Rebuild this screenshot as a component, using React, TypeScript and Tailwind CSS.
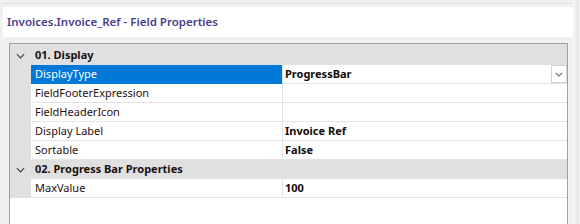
import React from 'react';

type Row = { name: string; value: string; selected?: boolean; dropdown?: boolean };
type Group = { title: string; rows: Row[]; first?: boolean };

const GROUPS: Group[] = [
  {
    title: '01. Display',
    first: true,
    rows: [
      { name: 'DisplayType', value: 'ProgressBar', selected: true, dropdown: true },
      { name: 'FieldFooterExpression', value: '' },
      { name: 'FieldHeaderIcon', value: '' },
      { name: 'Display Label', value: 'Invoice Ref' },
      { name: 'Sortable', value: 'False' },
    ],
  },
  {
    title: '02. Progress Bar Properties',
    rows: [{ name: 'MaxValue', value: '100' }],
  },
];

const Chevron = ({ className }: { className?: string }) => (
  <svg viewBox="0 0 10 6" className={className} fill="none" stroke="currentColor" strokeWidth="1.3">
    <path d="M1 1 L5 5 L9 1" />
  </svg>
);

export default function App() {
  return (
    <div
      className="w-[580px] h-[224px] overflow-hidden bg-[#f0f0f0] flex text-[11px]"
      style={{ fontFamily: '"Noto Sans", "Open Sans", sans-serif' }}
    >
      <div className="w-[573px] flex flex-col pt-[3px]">
        <div className="flex-1 flex flex-col border-t border-[#e3e3e3] pt-[3px]">
          {/* title */}
          <div className="ml-[3px] h-[30px] bg-white flex items-center pl-[4px] text-[11.5px] font-semibold text-[#483d8b]">
            Invoices.Invoice_Ref - Field Properties
          </div>

          {/* grid */}
          <div className="flex-1 flex pt-[6px] pl-[9px] pr-[5px]">
            <div className="flex-1 border-l border-t border-r border-[#a0a0a0] bg-white">
              {GROUPS.map((g) => (
                <div key={g.title}>
                  <div
                    className={`bg-[#e0e0e0] flex items-center ${g.first ? 'h-[21px] pt-[2px]' : 'h-[19px]'}`}
                  >
                    <div className="w-[21px] flex justify-center">
                      <Chevron className="w-[9px] h-[6px] text-[#404040]" />
                    </div>
                    <span className="pl-[4px] font-bold text-[#1a1010]">{g.title}</span>
                  </div>
                  {g.rows.map((r) => (
                    <div key={r.name} className="flex h-[19px]">
                      <div className="w-[21px] bg-[#e0e0e0]" />
                      <div
                        className={`w-[251px] border-b pl-[4px] flex items-center ${
                          r.selected
                            ? 'bg-[#0078d7] text-white border-[#0078d7]'
                            : 'text-[#2a1010] border-[#e3e3e3]'
                        }`}
                      >
                        {r.name}
                      </div>
                      <div className="flex-1 border-l border-b border-[#e3e3e3] flex items-center pl-[2px] font-bold text-[#100a0a]">
                        <span className="flex-1">{r.value}</span>
                        {r.dropdown && (
                          <div className="w-[16px] h-[18px] self-start border border-[#d4d4d4] bg-white flex items-center justify-center">
                            <Chevron className="w-[8px] h-[5px] text-[#606060]" />
                          </div>
                        )}
                      </div>
                    </div>
                  ))}
                </div>
              ))}
            </div>
          </div>
        </div>
      </div>
      <div className="flex-1 border-l border-[#f8f8f8] flex">
        <div className="w-[3px]" />
        <div className="border-l border-[#e0e0e0]" />
      </div>
    </div>
  );
}
